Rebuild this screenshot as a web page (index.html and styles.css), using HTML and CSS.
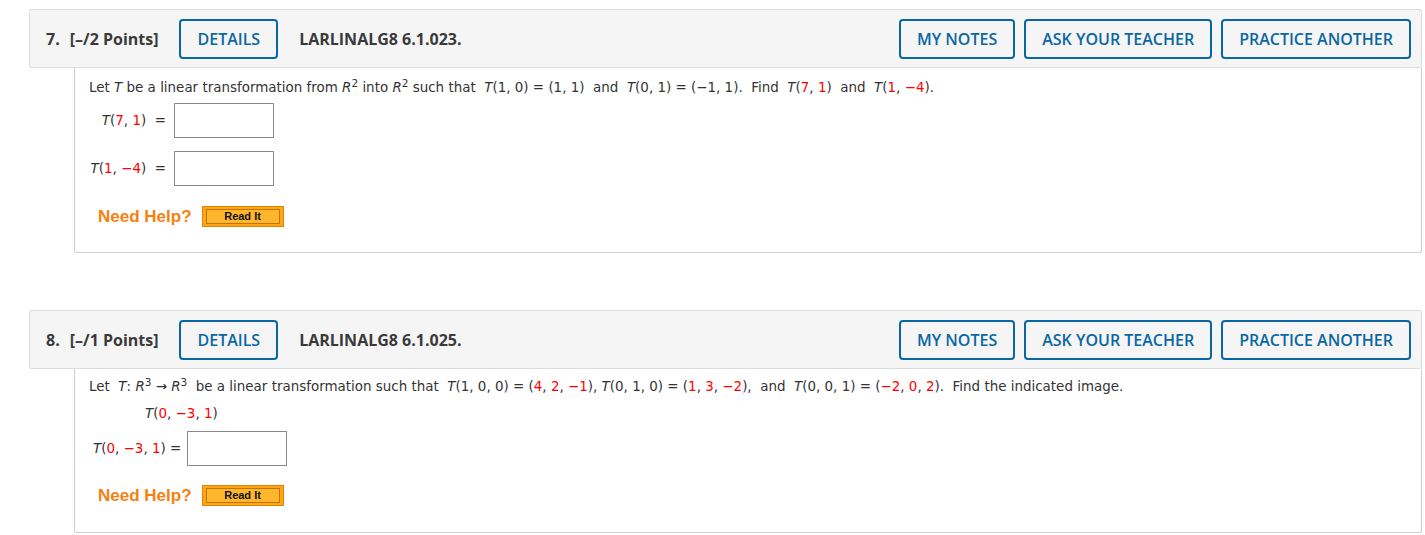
FILE: index.html
```html
<!DOCTYPE html>
<html>
  <head>
    <title>Assignment</title>
    <meta charset="UTF-8">
    <link rel="stylesheet" href="styles.css">
  </head>
  <body>
    <div class="question">
      <div class="q-head">
        <span class="q-num">7.</span>
        <span class="q-pts">[–/2 Points]</span>
        <span class="btn">DETAILS</span>
        <span class="q-id">LARLINALG8 6.1.023.</span>
        <span class="spacer"></span>
        <span class="btn">MY NOTES</span>
        <span class="btn">ASK YOUR TEACHER</span>
        <span class="btn">PRACTICE ANOTHER</span>
      </div>
      <div class="q-body">
        <p class="stem">Let <i>T</i> be a linear transformation from <i>R</i><sup>2</sup> into <i>R</i><sup>2</sup> such that&nbsp; <i>T</i>(1, 0) = (1, 1)&nbsp; and&nbsp; <i>T</i>(0, 1) = (−1, 1).&nbsp; Find&nbsp; <i>T</i>(<b class="r">7</b>, <b class="r">1</b>)&nbsp; and&nbsp; <i>T</i>(<b class="r">1</b>, <b class="r">−4</b>).</p>
        <div class="ans-row">
          <span class="ans-label"><i>T</i>(<b class="r">7</b>, <b class="r">1</b>) &nbsp;=</span>
          <span class="ans-box"></span>
        </div>
        <div class="ans-row">
          <span class="ans-label"><i>T</i>(<b class="r">1</b>, <b class="r">−4</b>) &nbsp;=</span>
          <span class="ans-box"></span>
        </div>
        <div class="help">
          <span class="help-text">Need Help?</span>
          <span class="readit"><span>Read It</span></span>
        </div>
      </div>
    </div>

    <div class="question">
      <div class="q-head">
        <span class="q-num">8.</span>
        <span class="q-pts">[–/1 Points]</span>
        <span class="btn">DETAILS</span>
        <span class="q-id">LARLINALG8 6.1.025.</span>
        <span class="spacer"></span>
        <span class="btn">MY NOTES</span>
        <span class="btn">ASK YOUR TEACHER</span>
        <span class="btn">PRACTICE ANOTHER</span>
      </div>
      <div class="q-body q8">
        <p class="stem">Let&nbsp; <i>T</i>: <i>R</i><sup>3</sup> → <i>R</i><sup>3</sup>&nbsp; be a linear transformation such that&nbsp; <i>T</i>(1, 0, 0) = (<b class="r">4</b>, <b class="r">2</b>, <b class="r">−1</b>), <i>T</i>(0, 1, 0) = (<b class="r">1</b>, <b class="r">3</b>, <b class="r">−2</b>),&nbsp; and&nbsp; <i>T</i>(0, 0, 1) = (<b class="r">−2</b>, <b class="r">0</b>, <b class="r">2</b>).&nbsp; Find the indicated image.</p>
        <p class="indent"><i>T</i>(<b class="r">0</b>, <b class="r">−3</b>, <b class="r">1</b>)</p>
        <div class="ans-row">
          <span class="ans-label wide"><i>T</i>(<b class="r">0</b>, <b class="r">−3</b>, <b class="r">1</b>) =</span>
          <span class="ans-box"></span>
        </div>
        <div class="help">
          <span class="help-text">Need Help?</span>
          <span class="readit"><span>Read It</span></span>
        </div>
      </div>
    </div>
  </body>
</html>
```

FILE: styles.css
```css
html {
  background: white;
}
body {
  margin: 0;
  padding: 9px 3px 0 29px;
  color: #333;
}
.question {
  margin-bottom: 57px;
}
.question:last-child {
  margin-bottom: 0;
}
.q-head {
  display: flex;
  align-items: center;
  height: 57px;
  background: #f5f5f5;
  border: 1px solid #dcdcdc;
  border-radius: 2px;
  padding: 0 10px 0 16px;
  font-family: "Open Sans", sans-serif;
  font-size: 16px;
  font-weight: bold;
  color: #3a3a3a;
}
.q-num {
  margin-right: 10px;
}
.q-pts {
  margin-right: 21px;
}
.q-id {
  margin-left: 21px;
}
.spacer {
  flex: 1;
}
.btn {
  display: inline-flex;
  align-items: center;
  height: 36px;
  padding: 0 16px;
  border: 2px solid #0a67a3;
  border-radius: 4px;
  color: #0a67a3;
  font-weight: 600;
  margin-left: 9px;
}
.q-head .btn:nth-child(3) {
  margin-left: 0;
}
.q-body {
  margin-left: 45px;
  border: 1px solid #cfcfcf;
  border-top: none;
  border-radius: 0 0 3px 3px;
  padding: 10px 14px 25px;
  font-family: "DejaVu Sans", Verdana, sans-serif;
  font-size: 13.45px;
  color: #333;
}
.q8 {
  padding-top: 8px;
  padding-bottom: 26px;
}
p {
  margin: 0;
}
.stem {
  line-height: 20px;
}
sup {
  font-size: 10.5px;
  line-height: 0;
}
i {
  font-style: italic;
}
.r {
  color: #f00;
  font-weight: normal;
}
.ans-row {
  display: flex;
  align-items: center;
  margin-top: 5px;
}
.ans-row + .ans-row {
  margin-top: 13px;
}
.ans-label {
  width: 77px;
  text-align: right;
  margin-right: 8px;
}
.ans-label.wide {
  width: 90px;
  margin-right: 4px;
  margin-left: 4px;
  text-align: left;
}
.ans-box {
  display: inline-block;
  width: 98px;
  height: 33px;
  border: 1px solid #8a8a8a;
  background: white;
}
.indent {
  padding-left: 56px;
  margin-top: 7px;
  line-height: 20px;
}
.q8 .ans-row {
  margin-top: 7px;
}
.help {
  display: flex;
  align-items: center;
  margin-top: 20px;
  padding-left: 9px;
}
.q8 .help {
  margin-top: 19px;
}
.help-text {
  font-family: "Liberation Sans", Arial, sans-serif;
  font-weight: bold;
  font-size: 17px;
  color: #f7800f;
  margin-right: 10px;
}
.readit {
  display: inline-block;
  border: 1px solid #e08600;
  background: #ffa516;
  padding: 2px 3px;
}
.readit span {
  display: block;
  border: 1px solid #c27400;
  background: #ffb62c;
  font-family: "Liberation Sans", Arial, sans-serif;
  font-weight: bold;
  font-size: 11px;
  color: #111;
  width: 72px;
  height: 13px;
  line-height: 13px;
  text-align: center;
}
```
